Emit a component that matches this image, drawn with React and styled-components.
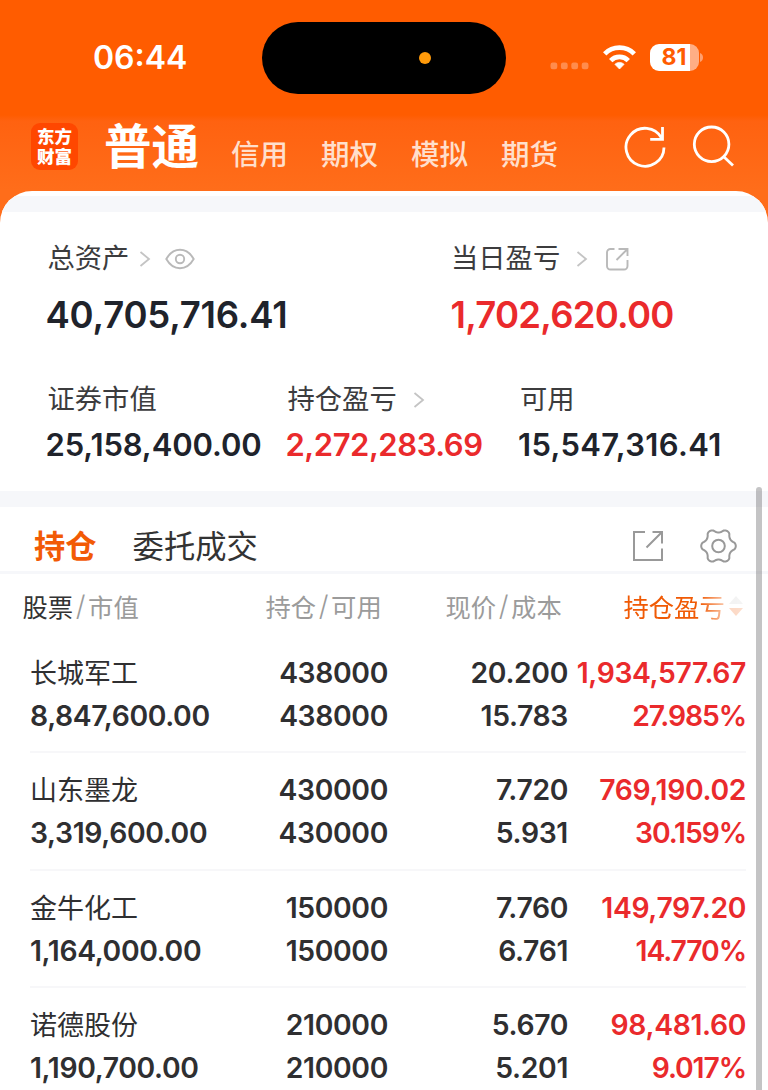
import React from 'react'
import styled, { createGlobalStyle } from 'styled-components'

const holdings = [
  { name: '长城军工', value: '8,847,600.00', amount: '438000', usable: '438000', price: '20.200', cost: '15.783', profit: '1,934,577.67', rate: '27.985%' },
  { name: '山东墨龙', value: '3,319,600.00', amount: '430000', usable: '430000', price: '7.720', cost: '5.931', profit: '769,190.02', rate: '30.159%' },
  { name: '金牛化工', value: '1,164,000.00', amount: '150000', usable: '150000', price: '7.760', cost: '6.761', profit: '149,797.20', rate: '14.770%' },
  { name: '诺德股份', value: '1,190,700.00', amount: '210000', usable: '210000', price: '5.670', cost: '5.201', profit: '98,481.60', rate: '9.017%' }
]

const accounts = ['信用', '期权', '模拟', '期货']

// outline of the settings gear, six soft teeth
const gearPoints = Array.from({ length: 90 }, (_, i) => {
  const angle = (i * Math.PI) / 45
  const wave = Math.cos(angle * 6)
  const radius = 15.4 + 1.9 * Math.sign(wave) * Math.abs(wave) ** 0.7
  return `${(18.5 + radius * Math.cos(angle)).toFixed(2)},${(18 + radius * Math.sin(angle)).toFixed(2)}`
}).join(' ')

const GlobalStyle = createGlobalStyle`
  * {
    box-sizing: border-box;
  }

  body {
    margin: 0;
    background: #fff;
    font-family: Inter, 'Noto Sans CJK SC', sans-serif;
    color: #2f2f31;
  }
`

const Screen = styled.div`
  position: relative;
  width: 768px;
  height: 1090px;
  overflow: hidden;
  background: linear-gradient(#ff5c00 0, #ff5c00 115px, #ff6210 121px, #ff6d1a 190px, #ff6d1a 230px, #fff 230px);
`

/* status bar */
const StatusBar = styled.div`
  display: flex;
  align-items: center;
  height: 115px;
  padding-left: 93px;
`

const Time = styled.div`
  width: 169px;
  font-size: 32px;
  font-weight: 600;
  line-height: 40px;
  color: #fff;
`

const Island = styled.div`
  display: flex;
  align-items: center;
  width: 244px;
  height: 72px;
  padding-left: 157px;
  border-radius: 36px;
  background: #000;

  &::after {
    content: '';
    width: 12px;
    height: 12px;
    border-radius: 50%;
    background: #ff9a0a;
  }
`

const Signal = styled.svg`
  margin: 16px 13px 0 44px;
`

const Battery = styled.div`
  display: flex;
  align-items: center;
  justify-content: center;
  width: 49px;
  height: 27px;
  margin: 0 1px 1px 12px;
  padding-right: 1px;
  border-radius: 9px;
  background: linear-gradient(90deg, #fff 40px, #ffae85 40px);
  font-size: 23px;
  font-weight: 700;
  color: #ff5c00;
`

/* account switcher */
const NavBar = styled.div`
  display: flex;
  height: 76px;
  padding-left: 31px;
`

const Logo = styled.div`
  width: 47px;
  height: 47px;
  margin-top: 8px;
  padding-top: 4px;
  border-radius: 9px;
  background: #ff4700;
  font-size: 17.5px;
  font-weight: 900;
  line-height: 19.5px;
  text-align: center;
  color: #fff;
`

const ActiveAccount = styled.div`
  width: 127px;
  margin-left: 26px;
  font-size: 47.5px;
  font-weight: 700;
  line-height: 63px;
  color: #fff;
`

const Account = styled.div`
  width: 90px;
  font-size: 28.5px;
  font-weight: 500;
  line-height: 80px;
  color: #ffdfcc;
`

const NavIcon = styled.svg`
  flex: none;
  margin: 8px 0 0 ${({ $gap }) => $gap}px;
`

/* assets */
const Card = styled.div`
  overflow: hidden;
  border-radius: 32px 32px 0 0;
  background: #fff;
`

const Band = styled.div`
  height: ${({ $height }) => $height}px;
  margin-top: ${({ $top = 0 }) => $top}px;
  background: #f6f7fa;
`

const Summary = styled.div`
  height: 279px;
  padding: 27px 0 0 45.5px;
`

const SummaryRow = styled.div`
  display: grid;
  grid-template-columns: ${({ $columns }) => $columns};
  height: 141px;
`

const Label = styled.div`
  display: flex;
  align-items: center;
  height: 40px;
  padding-left: ${({ $indent = 2 }) => $indent}px;
  font-size: 27.3px;
  line-height: 40px;
  color: #3c3c3e;

  svg {
    flex: none;
  }
`

const Amount = styled.div`
  font-size: ${({ $large }) => ($large ? 36.5 : 31)}px;
  font-weight: 600;
  letter-spacing: ${({ $spacing = 0 }) => $spacing}px;
  line-height: ${({ $large }) => ($large ? 72 : 49)}px;
  white-space: nowrap;
  color: ${({ $up }) => ($up ? '#ea2a2c' : '#20232b')};
`

/* holdings */
const Tabs = styled.div`
  display: flex;
  align-items: center;
  height: 64px;
  padding: 14px 30px 0 34px;
`

const Tab = styled.div`
  margin-right: 36px;
  font-size: 31.3px;
  font-weight: ${({ $active }) => ($active ? 600 : 400)};
  line-height: 40px;
  padding-top: 2px;
  color: ${({ $active }) => ($active ? '#f25a05' : '#333')};
`

const Tools = styled.div`
  display: flex;
  align-items: center;
  gap: 36px;
  margin-left: auto;
`

const TableHead = styled.div`
  display: grid;
  grid-template-columns: 243px 180px 178px auto;
  height: 62px;
  padding-left: 22.5px;
  font-size: 25.3px;
  color: #9b9b9b;
`

const HeadCell = styled.div`
  display: flex;
  align-items: center;
  height: 64px;

  strong {
    font-weight: 400;
    color: #333;
  }
`

const Slash = styled.span`
  width: 15px;
  font-size: 28px;
  font-weight: 300;
  line-height: 30px;
  text-align: center;
`

const SortedCell = styled(HeadCell)`
  width: 122px;
  color: #f05a05;
  mask-image: linear-gradient(90deg, #000 76px, rgba(0, 0, 0, 0.25) 104px, rgba(0, 0, 0, 0.2));
`

const Holding = styled.div`
  display: grid;
  grid-template-columns: 180px 178px 180px 178px;
  height: 117.3px;
  margin: 0 22px 0 30px;
  padding-top: 16px;
  border-bottom: 2px solid #f7f7f9;
  font-size: 28.3px;
  font-weight: 600;
  letter-spacing: -0.35px;
  line-height: 43px;
  white-space: nowrap;
`

const Cell = styled.div`
  text-align: right;
  color: ${({ $up }) => ($up ? '#ea2a2c' : '#2f2f31')};
`

const Rate = styled.div`
  letter-spacing: -1.1px;
`

const StockName = styled.div`
  height: 43px;
  font-size: 27px;
  font-weight: 400;
  letter-spacing: 0;
  line-height: 43px;
`

const ScrollThumb = styled.div`
  position: absolute;
  top: 487px;
  right: 6px;
  width: 6px;
  height: 640px;
  border-radius: 3px;
  background: rgba(60, 60, 64, 0.3);
`

const ChevronIcon = styled.svg`
  margin-left: ${({ $gap }) => $gap}px;
`

const Chevron = ({ gap }) => (
  <ChevronIcon $gap={gap} width="12" height="18" viewBox="0 0 12 18" fill="none" stroke="#c4c4c4" strokeWidth="1.8">
    <path d="M1.500 2 10 9l-8.500 7" />
  </ChevronIcon>
)

const EyeIcon = styled.svg`
  margin-left: 14px;
`

const Eye = () => (
  <EyeIcon width="30" height="22" viewBox="0 0 30 22" fill="none" stroke="#b9b9b9" strokeWidth="1.9">
    <path d="M1.300 11C5 4.500 9.500 1.800 15 1.800S25 4.500 28.700 11C25 17.500 20.500 20.200 15 20.200S5 17.500 1.300 11z" />
    <circle cx="15" cy="11" r="4.200" />
  </EyeIcon>
)

const ShareIcon = styled.svg`
  margin-left: 17px;
`

const Share = () => (
  <ShareIcon width="24" height="24" viewBox="0 0 24 24" fill="none" stroke="#b9b9b9" strokeWidth="1.9">
    <path d="M9.500 2H5.500A3.500 3.500 0 0 0 2 5.500V19a3.500 3.500 0 0 0 3.500 3.500H19a3.500 3.500 0 0 0 3.500-3.500v-6M13.500 2h9v7M22.500 2 11.500 13" />
  </ShareIcon>
)

const SortIcon = styled.svg`
  margin-left: 3px;
`

const App = () => (
  <Screen>
    <GlobalStyle />
    <StatusBar>
      <Time>06:44</Time>
      <Island />
      <Signal width="39" height="8" viewBox="0 0 39 8" fill="#ff8c4d">
        {[0.5, 10.9, 21.3, 31.7].map((x) => <rect key={x} x={x} y="0.5" width="6.800" height="6.800" rx="2.200" />)}
      </Signal>
      <svg width="36" height="28" viewBox="0 0 36 28" fill="none" stroke="#fff" strokeWidth="4.700">
        <path d="M2.700 9.900a20.800 20.800 0 0 1 29.600 0M8.700 16.600a12.300 12.300 0 0 1 17.600 0" />
        <path d="M17.500 25l-4.600-4.700a6.600 6.600 0 0 1 9.200 0z" fill="#fff" strokeWidth="0.800" strokeLinejoin="round" />
      </svg>
      <Battery>81</Battery>
      <svg width="3" height="9" viewBox="0 0 3 9" fill="#ffa070">
        <path d="M0 0c4 1.500 4 7.500 0 9z" />
      </svg>
    </StatusBar>
    <NavBar>
      <Logo>东方<br />财富</Logo>
      <ActiveAccount>普通</ActiveAccount>
      {accounts.map((name) => <Account key={name}>{name}</Account>)}
      <NavIcon $gap={32} width="44" height="48" viewBox="0 0 44 48" fill="none" stroke="#fff" strokeWidth="2.800">
        <path d="M41 24.500A19 19 0 1 1 38.600 15M39.500 4v12.300H27.200" />
      </NavIcon>
      <NavIcon $gap={24} width="44" height="48" viewBox="0 0 44 48" fill="none" stroke="#fff" strokeWidth="2.800">
        <circle cx="20.600" cy="21.300" r="17.300" />
        <path d="M32.500 33.500 42 42.500" />
      </NavIcon>
    </NavBar>
    <Card>
      <Band $height={16} $top={5} />
      <Summary>
        <SummaryRow $columns="405px auto">
          <div>
            <Label>总资产<Chevron gap={10} /><Eye /></Label>
            <Amount $large $spacing={-0.2}>40,705,716.41</Amount>
          </div>
          <div>
            <Label $indent={0.5}>当日盈亏<Chevron gap={15.5} /><Share /></Label>
            <Amount $large $up $spacing={-0.75}>1,702,620.00</Amount>
          </div>
        </SummaryRow>
        <SummaryRow $columns="240px 232.5px auto">
          <div>
            <Label>证券市值</Label>
            <Amount $spacing={-0.1}>25,158,400.00</Amount>
          </div>
          <div>
            <Label>持仓盈亏<Chevron gap={16} /></Label>
            <Amount $up $spacing={-0.45}>2,272,283.69</Amount>
          </div>
          <div>
            <Label>可用</Label>
            <Amount $spacing={0.35}>15,547,316.41</Amount>
          </div>
        </SummaryRow>
      </Summary>
      <Band $height={16} />
      <Tabs>
        <Tab $active>持仓</Tab>
        <Tab>委托成交</Tab>
        <Tools>
          <svg width="32" height="32" viewBox="0 0 32 32" fill="none" stroke="#999" strokeWidth="2">
            <path d="M13 2H2v28h28V18.500M20.500 2H30v11.500M30 2 14.500 17.500" />
          </svg>
          <svg width="38" height="36" viewBox="0 0 38 36" fill="none" stroke="#999" strokeWidth="2" strokeLinejoin="round">
            <polygon points={gearPoints} />
            <circle cx="18.500" cy="18" r="6.300" />
          </svg>
        </Tools>
      </Tabs>
      <Band $height={3} />
      <TableHead>
        <HeadCell><strong>股票</strong><Slash>/</Slash>市值</HeadCell>
        <HeadCell>持仓<Slash>/</Slash>可用</HeadCell>
        <HeadCell>现价<Slash>/</Slash>成本</HeadCell>
        <SortedCell>
          持仓盈亏
          <SortIcon width="16" height="22" viewBox="0 0 16 22">
            <path d="M1 9 8 1l7 8z" fill="#ccc" />
            <path d="M1 13l7 8 7-8z" fill="#f2600f" />
          </SortIcon>
        </SortedCell>
      </TableHead>
      {holdings.map((h) => (
        <Holding key={h.name}>
          <div>
            <StockName>{h.name}</StockName>
            {h.value}
          </div>
          <Cell>{h.amount}<br />{h.usable}</Cell>
          <Cell>{h.price}<br />{h.cost}</Cell>
          <Cell $up>
            {h.profit}
            <Rate>{h.rate}</Rate>
          </Cell>
        </Holding>
      ))}
    </Card>
    <ScrollThumb />
  </Screen>
)

export default App
